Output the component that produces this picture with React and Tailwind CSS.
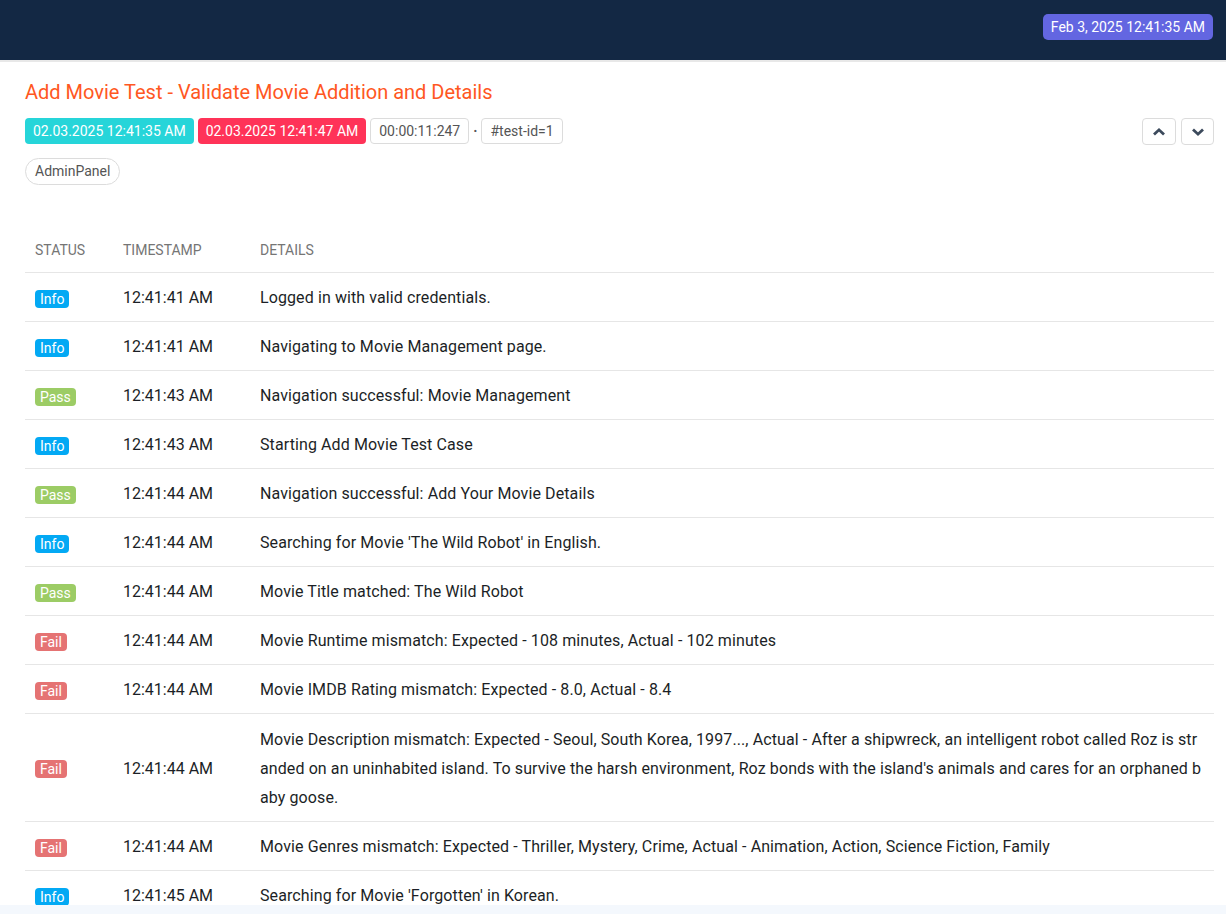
import React from "react";

const rows = [
  ["Info", "12:41:41 AM", "Logged in with valid credentials."],
  ["Info", "12:41:41 AM", "Navigating to Movie Management page."],
  ["Pass", "12:41:43 AM", "Navigation successful: Movie Management"],
  ["Info", "12:41:43 AM", "Starting Add Movie Test Case"],
  ["Pass", "12:41:44 AM", "Navigation successful: Add Your Movie Details"],
  ["Info", "12:41:44 AM", "Searching for Movie 'The Wild Robot' in English."],
  ["Pass", "12:41:44 AM", "Movie Title matched: The Wild Robot"],
  ["Fail", "12:41:44 AM", "Movie Runtime mismatch: Expected - 108 minutes, Actual - 102 minutes"],
  ["Fail", "12:41:44 AM", "Movie IMDB Rating mismatch: Expected - 8.0, Actual - 8.4"],
  [
    "Fail",
    "12:41:44 AM",
    "Movie Description mismatch: Expected - Seoul, South Korea, 1997..., Actual - After a shipwreck, an intelligent robot called Roz is stranded on an uninhabited island. To survive the harsh environment, Roz bonds with the island's animals and cares for an orphaned baby goose.",
  ],
  ["Fail", "12:41:44 AM", "Movie Genres mismatch: Expected - Thriller, Mystery, Crime, Actual - Animation, Action, Science Fiction, Family"],
  ["Info", "12:41:45 AM", "Searching for Movie 'Forgotten' in Korean."],
  ["Pass", "12:41:45 AM", "Movie Title matched: Forgotten"],
];

function Status({ s }) {
  const cls =
    s === "Info"
      ? "bg-[#03a9f4]"
      : s === "Pass"
      ? "bg-[#9ccc65]"
      : "bg-[#e57373]";
  return (
    <span className={`inline-block align-middle ${cls} text-white text-[14px] leading-[18px] px-[5px] rounded-[4px]`}>
      {s}
    </span>
  );
}

export default function App() {
  return (
    <div
      className="h-[914px] w-full flex flex-col overflow-hidden bg-white"
      style={{ fontFamily: "Roboto, 'Liberation Sans', sans-serif" }}
    >
      <header className="h-[60px] shrink-0 bg-[#132844] flex items-start justify-end pr-[13px] pt-[14px]">
        <span className="bg-[#6366e1] text-white text-[14px] leading-[26px] px-[8px] rounded-[5px]">
          Feb 3, 2025 12:41:35 AM
        </span>
      </header>
      <div className="h-[2px] shrink-0 bg-[#e8e8e8]" />
      <main className="flex-1 overflow-hidden pl-[25px] pr-[12px] pt-[16px]">
        <div className="flex items-start justify-between">
          <div>
            <h1 className="text-[20px] leading-[28px] text-[#ff5722] font-normal">
              Add Movie Test - Validate Movie Addition and Details
            </h1>
            <div className="flex items-center gap-[4px] mt-[12px] text-[14px]">
              <span className="bg-[#26d5d9] text-white leading-[26px] px-[8px] rounded-[4px]">
                02.03.2025 12:41:35 AM
              </span>
              <span className="bg-[#ff3358] text-white leading-[26px] px-[8px] rounded-[4px]">
                02.03.2025 12:41:47 AM
              </span>
              <span className="border border-[#dcdcdc] text-[#555] leading-[24px] px-[8px] rounded-[4px]">
                00:00:11:247
              </span>
              <span className="text-[#555] font-bold">·</span>
              <span className="border border-[#dcdcdc] text-[#555] leading-[24px] px-[8px] rounded-[4px]">
                #test-id=1
              </span>
            </div>
            <div className="mt-[14px]">
              <span className="inline-block border border-[#dcdcdc] text-[#555] text-[14px] leading-[25px] px-[9px] rounded-full">
                AdminPanel
              </span>
            </div>
          </div>
          <div className="flex gap-[5px] mt-[40px]">
            <button className="w-[34px] h-[27px] border border-[#dcdcdc] rounded-[4px] flex items-center justify-center">
              <svg width="14" height="10" viewBox="0 0 14 10" fill="none">
                <path d="M2 7.5 L7 2.8 L12 7.5" stroke="#3c4a5c" strokeWidth="2.8" strokeLinecap="butt" strokeLinejoin="miter" />
              </svg>
            </button>
            <button className="w-[33px] h-[27px] border border-[#dcdcdc] rounded-[4px] flex items-center justify-center">
              <svg width="14" height="10" viewBox="0 0 14 10" fill="none">
                <path d="M2 2.5 L7 7.2 L12 2.5" stroke="#3c4a5c" strokeWidth="2.8" strokeLinecap="butt" strokeLinejoin="miter" />
              </svg>
            </button>
          </div>
        </div>

        <table className="w-full table-fixed border-collapse mt-[39px]">
          <colgroup>
            <col className="w-[88px]" />
            <col className="w-[137px]" />
            <col />
          </colgroup>
          <thead>
            <tr className="border-b border-[#e6e6e6]">
              <th className="text-left font-normal text-[14px] text-[#757575] uppercase pl-[10px] pt-[12px] pb-[7px] leading-[29px]">Status</th>
              <th className="text-left font-normal text-[14px] text-[#757575] uppercase pl-[10px] pt-[12px] pb-[7px] leading-[29px]">Timestamp</th>
              <th className="text-left font-normal text-[14px] text-[#757575] uppercase pl-[10px] pt-[12px] pb-[7px] leading-[29px]">Details</th>
            </tr>
          </thead>
          <tbody>
            {rows.map(([s, t, d], i) => (
              <tr key={i} className="border-b border-[#e6e6e6] text-[16px] text-[#1c1f26]">
                <td className="pl-[10px] pt-[10px] pb-[9px] leading-[29px] align-middle">
                  <Status s={s} />
                </td>
                <td className="pl-[10px] pt-[10px] pb-[9px] leading-[29px] align-middle">{t}</td>
                <td className="px-[10px] pt-[10px] pb-[9px] leading-[29px] align-middle break-all tracking-[0.1px]">
                  <div className={d.length > 200 ? "py-[0.5px]" : ""}>{d}</div>
                </td>
              </tr>
            ))}
          </tbody>
        </table>
      </main>
      <div className="h-[9px] shrink-0 bg-[#f4f8fd]" />
    </div>
  );
}
